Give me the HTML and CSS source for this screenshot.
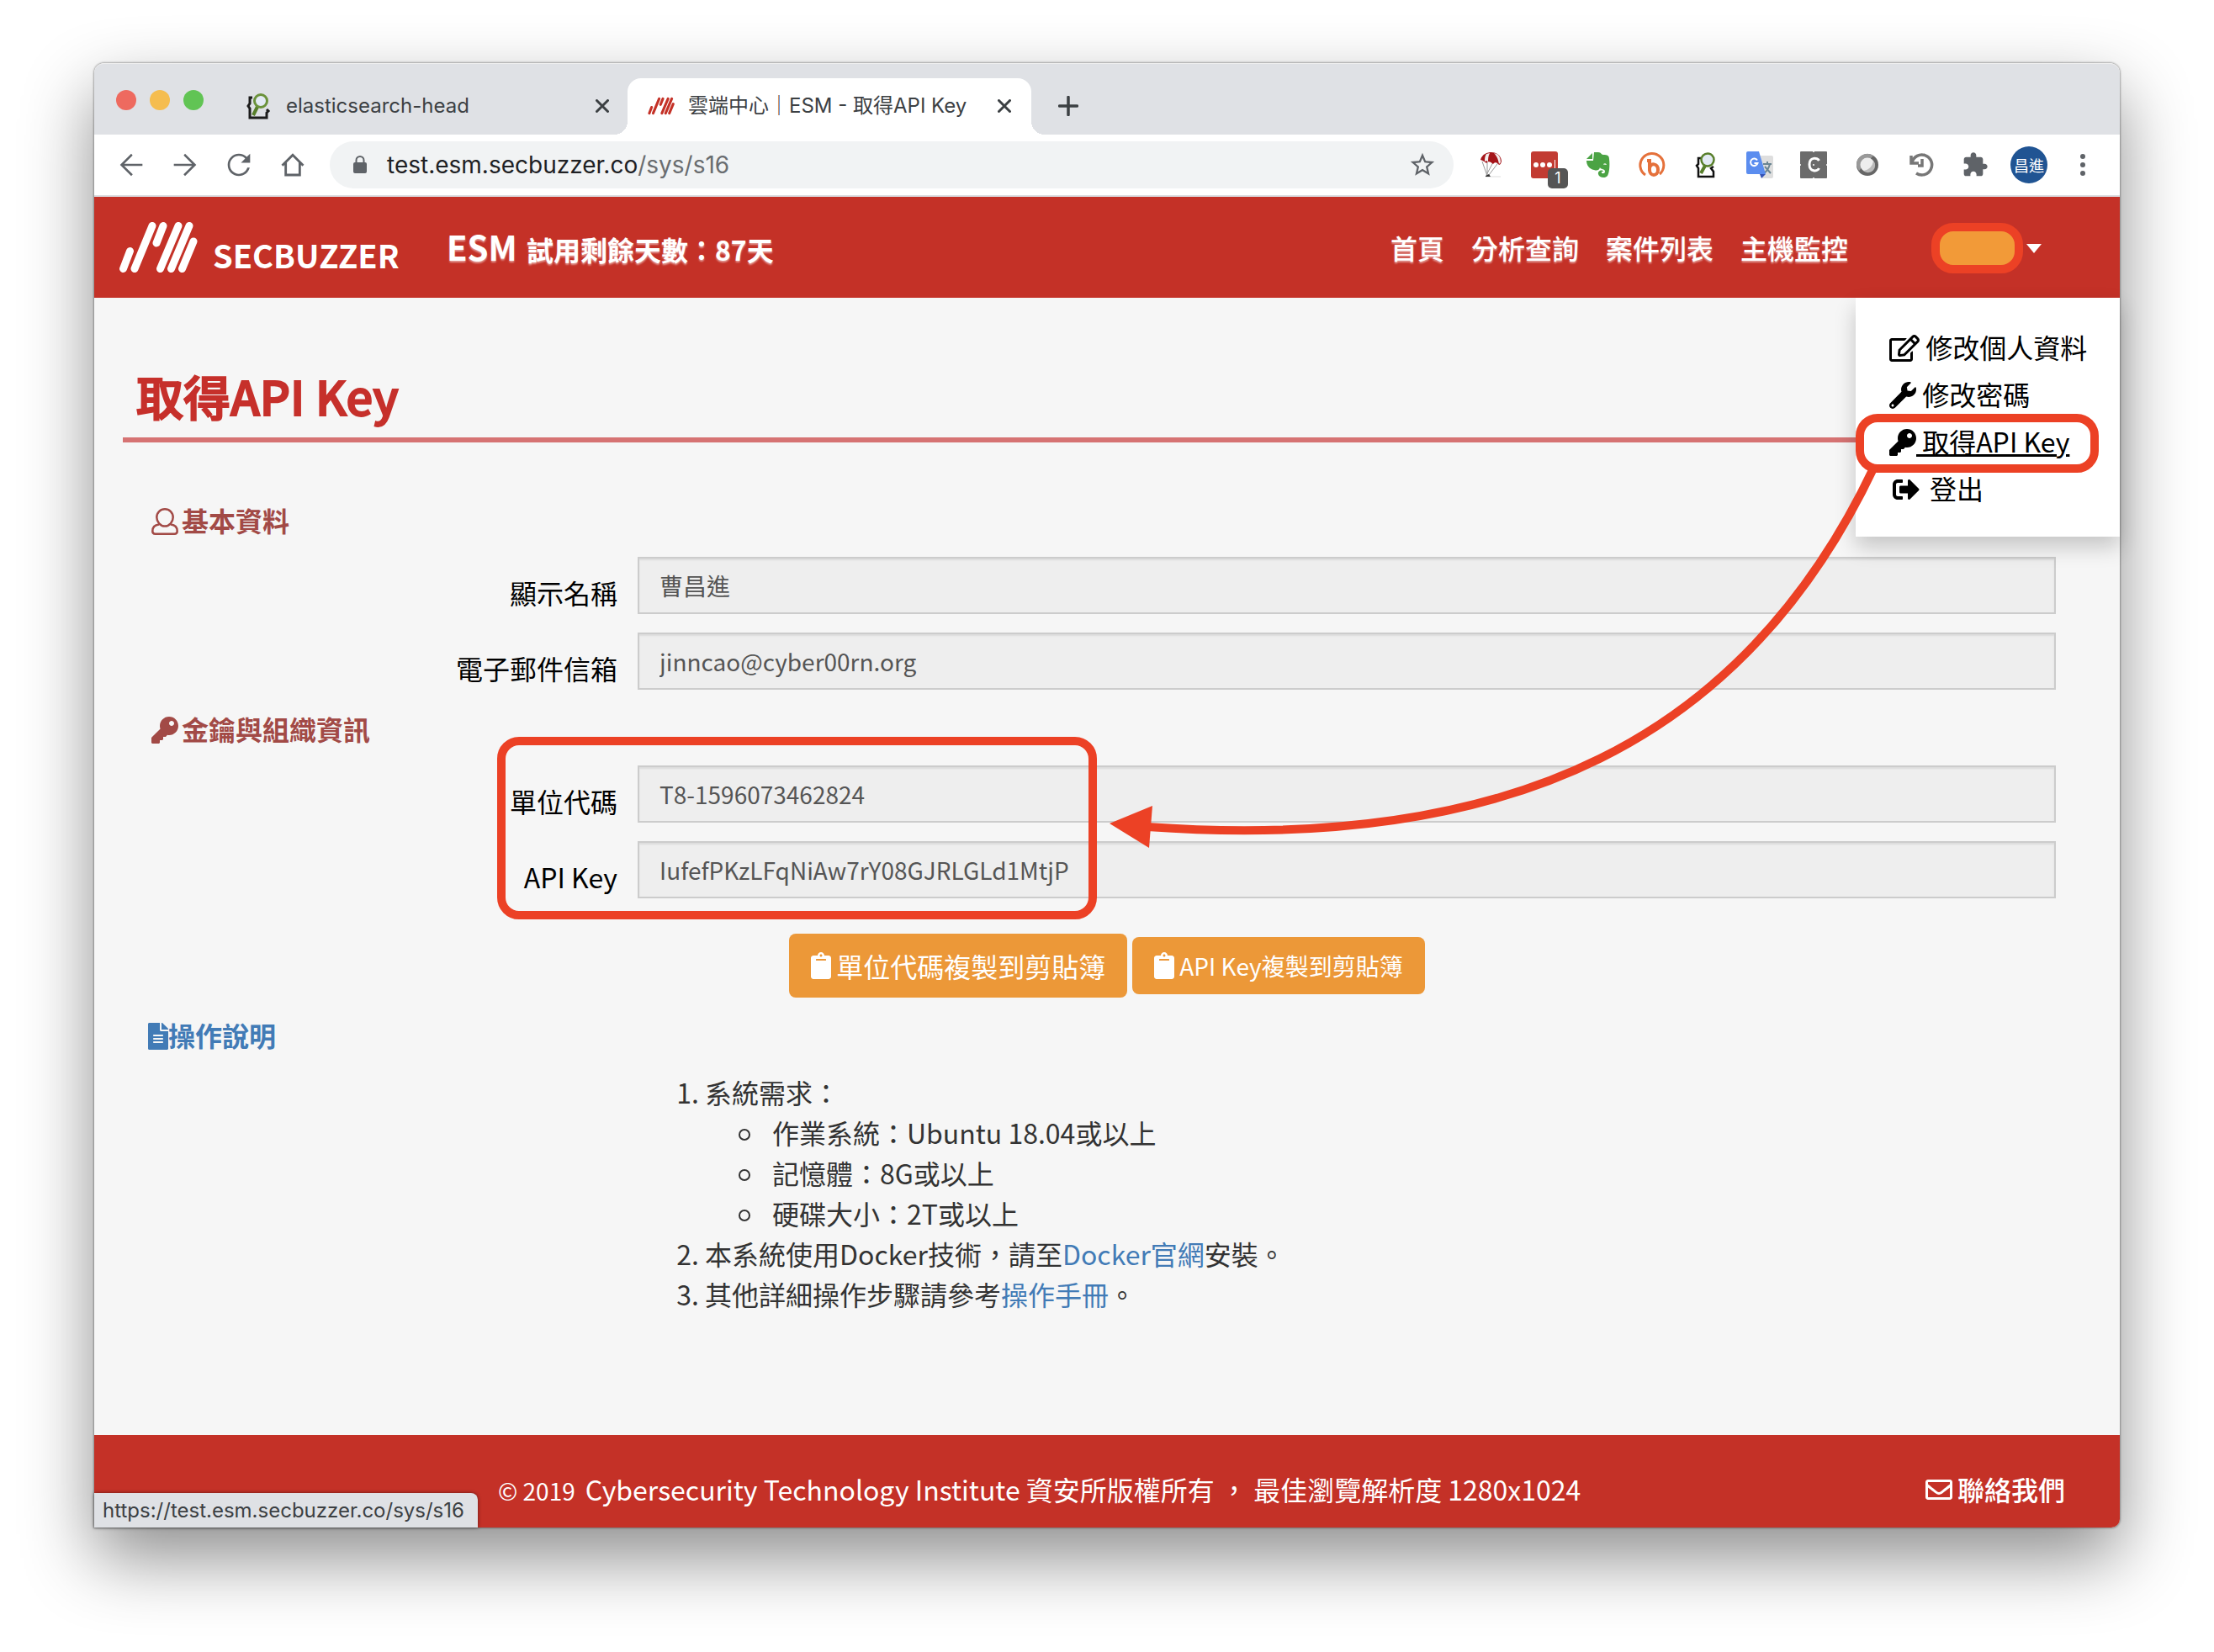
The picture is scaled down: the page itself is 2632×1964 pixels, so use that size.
FILE: index.html
```html
<!DOCTYPE html>
<html lang="zh-Hant">
<head>
<meta charset="utf-8">
<title>雲端中心｜ESM - 取得API Key</title>
<link rel="stylesheet" href="styles.css">
</head>
<body>
<svg class="sprite" aria-hidden="true">
  <symbol id="key" viewBox="0 0 512 512"><path d="M512 176.001C512 273.203 433.202 352 336 352c-11.22 0-22.19-1.062-32.827-3.069l-24.012 27.014A23.999 23.999 0 0 1 261.223 384H224v40c0 13.255-10.745 24-24 24h-40v40c0 13.255-10.745 24-24 24H24c-13.255 0-24-10.745-24-24v-78.059c0-6.365 2.529-12.47 7.029-16.971l161.802-161.802C163.108 213.814 160 195.271 160 176 160 78.798 238.797.001 335.999 0 433.488-.001 512 78.511 512 176.001zM336 128c0 26.51 21.49 48 48 48s48-21.49 48-48-21.49-48-48-48-48 21.49-48 48z"/></symbol>
  <symbol id="clipboard" viewBox="0 0 384 512"><path d="M384 112v352c0 26.51-21.49 48-48 48H48c-26.51 0-48-21.49-48-48V112c0-26.51 21.49-48 48-48h80c0-35.29 28.71-64 64-64s64 28.71 64 64h80c26.51 0 48 21.49 48 48zM192 40c-13.255 0-24 10.745-24 24s10.745 24 24 24 24-10.745 24-24-10.745-24-24-24m96 114v-20a6 6 0 0 0-6-6H102a6 6 0 0 0-6 6v20a6 6 0 0 0 6 6h180a6 6 0 0 0 6-6z"/></symbol>
  <symbol id="bars" viewBox="0 0 94 60"><path d="M5.5 55.500l8-21M19 55.500L40 4.500M45 25l8-20.500M49.500 55.500L71 4.500M62.500 55.500L84 4.500M75.500 55.500L89 23" fill="none" stroke="currentColor" stroke-width="9" stroke-linecap="round"/></symbol>
  <symbol id="close" viewBox="0 0 16 16"><path d="M1.500 1.500l13 13M14.500 1.500l-13 13" fill="none" stroke="currentColor" stroke-width="3" stroke-linecap="round"/></symbol>
  <symbol id="elastic" viewBox="0 0 32 32"><path d="M8 6H5v7l-2 3 2 3v11h20v-6l2-2-2-2" fill="none" stroke="#1c1c1c" stroke-width="3"/><path d="M14 17L9 27" stroke="#587f2b" stroke-width="4"/><circle cx="18" cy="10" r="7.500" fill="#e3eaf4" stroke="#6b923b" stroke-width="3"/></symbol>
</svg>
<div class="window">
  <div class="tabstrip">
    <div class="lights"><i class="light red"></i><i class="light yellow"></i><i class="light green"></i></div>
    <div class="tab">
      <svg class="favicon"><use href="#elastic"/></svg>
      <span class="tab-title">elasticsearch-head</span>
      <button class="tab-close" aria-label="Close"><svg><use href="#close"/></svg></button>
    </div>
    <div class="tab active">
      <svg class="favicon brand-red"><use href="#bars"/></svg>
      <span class="tab-title">雲端中心｜ESM - 取得API Key</span>
      <button class="tab-close" aria-label="Close"><svg><use href="#close"/></svg></button>
    </div>
    <button class="new-tab" aria-label="New tab"><svg viewBox="0 0 24 24"><path d="M12 1.500v21M1.500 12h21" stroke="currentColor" stroke-width="3.500" stroke-linecap="round"/></svg></button>
  </div>
  <div class="toolbar">
    <button class="tool" aria-label="Back"><svg viewBox="0 0 24 24"><path d="M20 11.200H7L13 5.200 12 4l-8 8 8 8 1.100-1.200L7 12.800h13z"/></svg></button>
    <button class="tool" aria-label="Forward"><svg viewBox="0 0 24 24"><path d="M4 11.200h13L11 5.200 12 4l8 8-8 8-1.100-1.200 6.100-6H4z"/></svg></button>
    <button class="tool" aria-label="Reload"><svg viewBox="0 0 24 24"><path d="M17.650 6.350C16.200 4.900 14.210 4 12 4c-4.420 0-7.990 3.580-7.990 8s3.570 8 7.990 8c3.730 0 6.840-2.550 7.730-6h-1.700c-.82 2.600-3.200 4.400-6.030 4.400-3.500 0-6.400-2.900-6.400-6.400s2.900-6.400 6.400-6.400c1.800 0 3.400.7 4.500 1.900L13.500 10.500H20V4z"/></svg></button>
    <button class="tool" aria-label="Home"><svg viewBox="0 0 24 24"><path d="M4.500 12.500L12 5l7.500 7.500M7 10.500v8.700h10v-8.700" fill="none" stroke="currentColor" stroke-width="1.700"/></svg></button>
    <div class="address">
      <svg class="lock" viewBox="0 0 16 22"><rect y="8" width="16" height="13" rx="2"/><path d="M3.500 9V5.500a4.500 4.500 0 0 1 9 0V9" fill="none" stroke="currentColor" stroke-width="2"/></svg>
      <span class="url" role="textbox" aria-label="Address">test.esm.secbuzzer.co<span class="path">/sys/s16</span></span>
      <button class="star" aria-label="Bookmark"><svg viewBox="0 0 24 24"><path d="M22 9.240l-7.190-.62L12 2 9.190 8.630 2 9.240l5.460 4.730L5.820 21 12 17.270 18.180 21l-1.630-7.030L22 9.240zM12 15.400l-3.760 2.270 1-4.280-3.320-2.880 4.380-.38L12 6.100l1.710 4.040 4.380.38-3.320 2.880 1 4.280L12 15.400z"/></svg></button>
    </div>
    <button class="tool ext" aria-label="Parachute"><svg viewBox="0 0 32 32"><path d="M6 12l6 17M27 11L14 28M12 12l0 16M19 13l-8 15" stroke="#999" fill="none"/><path d="M10 30h18" stroke="#ddd"/><path d="M4 10C6 3 12 1 17 1c7 0 12 5 12 11-1 3-2 4-3 4-2-3-5-4-7-1-3-3-6-4-8-1-2-2-4-3-7-4z" fill="#a51419"/><path d="M11 3c-2 3-2 6-2 9 2-1 3-1 4 1 0-4 0-7 2-11zM20 2c3 3 5 7 6 13l2-2c0-5-2-9-5-10z" fill="#f3eeee"/><path d="M10 29l4-2 2 3h-6z" fill="#333"/></svg></button>
    <button class="tool ext" aria-label="Passwords"><svg viewBox="0 0 32 32"><rect width="32" height="32" rx="3" fill="#c23b32"/><g fill="#fff"><circle cx="6" cy="16" r="3"/><circle cx="14" cy="16" r="3"/><circle cx="22" cy="16" r="3"/><path d="M28 10h1v12h-1z"/></g></svg><span class="badge">1</span></button>
    <button class="tool ext" aria-label="Notes"><svg viewBox="0 0 32 32"><path d="M11 1h5c4 0 3 3 6 3 5 0 7 1 7 5 1 8 0 17-2 20-2 3-10 3-11-2-1-4 5-6 6-3h-2c-1 3 4 3 4 0 0-4-5-2-6-5-1 4-4 4-7 3C5 21 2 16 2 11h8z" fill="#4ba344"/><path d="M9 2v7H2z" fill="#4ba344"/><path d="M22 15q3-2 4 1l-4-.5z" fill="#fff"/></svg></button>
    <button class="tool ext" aria-label="Bitly"><svg viewBox="0 0 32 32"><g fill="none" stroke="#e5713b" stroke-width="3"><path d="M8 28A14 14 0 1 1 25 27"/><path d="M10 11h3v12M13 20c1-7 10-6 10 2s-10 8-10 0" stroke-width="4"/></g></svg></button>
    <button class="tool ext" aria-label="Elasticsearch head"><svg viewBox="0 0 32 32"><path d="M10 8H7v7l-2 2 2 3v10h18v-6l-3-4 3-2" fill="none" stroke="#111" stroke-width="2.500"/><path d="M15 17L10 26" stroke="#587f2b" stroke-width="4"/><circle cx="18" cy="10" r="7.500" fill="#e3eaf4" stroke="#587f2b" stroke-width="2.500"/></svg></button>
    <button class="tool ext" aria-label="Translate"><svg viewBox="0 0 32 32"><path d="M12 5h18a2 2 0 0 1 2 2v23a2 2 0 0 1-2 2H19z" fill="#dedede"/><path d="M20 15h10M25 12v3M21 26c4-3 6-7 7-11M22 18l7 8" fill="none" stroke="#6b8592" stroke-width="2"/><path d="M16 27h7l-5 5z" fill="#3553b5"/><path d="M2 0h13l8 27H2a2 2 0 0 1-2-2V2a2 2 0 0 1 2-2z" fill="#5b8def"/><path d="M13 10.500A4.300 4.300 0 1 0 13.500 14H9.500" fill="none" stroke="#fff" stroke-width="2"/></svg></button>
    <button class="tool ext" aria-label="Capture"><svg viewBox="0 0 32 32"><rect width="32" height="32" rx="1" fill="#6b6b6b"/><path d="M22.500 11C20.500 7 11 6.500 11 15.500S20.500 24.500 22.500 20" fill="none" stroke="#fff" stroke-width="3"/><path d="M15 0h2v1h-2zM15 31h2v1h-2zM0 15h1v2H0zM31 15h1v2h-1zM15 15h2v2h-2z" fill="#ddd"/></svg></button>
    <button class="tool ext" aria-label="Moon"><svg viewBox="0 0 32 32"><circle cx="16" cy="16" r="13" fill="#666"/><path d="M3 17A13 13 0 0 1 23 5L6 23z" fill="#999"/><circle cx="16" cy="16" r="8.500" fill="#eee"/><path d="M23 11a8.500 8.500 0 0 1-12 12c7-1 11-5 12-12z" fill="#bbb"/></svg></button>
    <button class="tool ext" aria-label="History"><svg viewBox="0 0 32 32"><path d="M4 5v9h9M5 13A12 12 0 1 1 10 26M17 9v8h-5" fill="none" stroke="#777" stroke-width="3.500"/></svg></button>
    <button class="tool ext" aria-label="Extensions"><svg viewBox="0 0 24 24"><path d="M20.500 11H19V7c0-1.100-.9-2-2-2h-4V3.500C13 2.120 11.880 1 10.500 1S8 2.120 8 3.500V5H4c-1.100 0-1.990.9-1.990 2v3.800H3.500c1.490 0 2.700 1.210 2.700 2.700s-1.210 2.700-2.700 2.700H2V20c0 1.100.9 2 2 2h3.800v-1.500c0-1.490 1.210-2.700 2.700-2.700 1.490 0 2.700 1.210 2.700 2.700V22H17c1.100 0 2-.9 2-2v-4h1.500c1.380 0 2.500-1.120 2.500-2.500S21.880 11 20.500 11z"/></svg></button>
    <button class="tool"><span class="avatar">昌進</span></button>
    <button class="tool ext" aria-label="Menu"><svg viewBox="0 0 32 32"><circle cx="16" cy="6" r="3"/><circle cx="16" cy="16" r="3"/><circle cx="16" cy="26" r="3"/></svg></button>
  </div>

  <header class="site-header">
    <a class="logo" href="#"><svg><use href="#bars"/></svg><span>SECBUZZER</span></a>
    <p class="trial"><span class="esm">ESM</span> <span>試用剩餘天數：87天</span></p>
    <nav class="nav">
      <a href="#">首頁</a><a href="#">分析查詢</a><a href="#">案件列表</a><a href="#">主機監控</a>
    </nav>
    <button class="account" aria-label="Account"><span class="mask"></span><span class="caret"></span></button>
    <div class="menu">
      <a href="#"><svg class="wide" viewBox="0 0 576 512"><path d="M402.300 344.900l32-32c5-5 13.700-1.500 13.700 5.700V464c0 26.500-21.500 48-48 48H48c-26.500 0-48-21.500-48-48V112c0-26.500 21.500-48 48-48h273.500c7.100 0 10.700 8.600 5.700 13.700l-32 32c-1.500 1.500-3.500 2.300-5.700 2.300H48v352h352V350.500c0-2.100.8-4.100 2.300-5.600zm156.600-201.800L296.300 405.700l-90.400 10c-26.200 2.900-48.500-19.200-45.600-45.600l10-90.400L432.900 17.100c22.900-22.900 59.900-22.900 82.700 0l43.200 43.200c22.900 22.900 22.900 60 .1 82.800zM460.100 174L402 115.900 216.200 301.800l-7.300 65.300 65.300-7.300L460.100 174zm64.800-79.700l-43.200-43.200c-4.100-4.100-10.800-4.100-14.800 0L436 82l58.100 58.100 30.900-30.900c4-4.200 4-10.800-.1-14.900z"/></svg>&nbsp;修改個人資料</a>
      <a href="#"><svg viewBox="0 0 512 512"><path d="M507.730 109.100c-2.240-9.030-13.540-12.090-20.120-5.510l-74.360 74.360-67.880-11.310-11.310-67.880 74.360-74.360c6.620-6.620 3.430-17.900-5.660-20.160-47.380-11.740-99.550.91-136.580 37.930-39.640 39.640-50.550 97.100-34.050 147.200L18.740 402.760c-24.990 24.990-24.990 65.510 0 90.500 24.990 24.990 65.510 24.990 90.500 0l213.210-213.210c50.120 16.710 107.470 5.680 147.370-34.220 37.070-37.070 49.700-89.320 37.910-136.730zM64 472c-13.250 0-24-10.750-24-24 0-13.260 10.750-24 24-24s24 10.740 24 24c0 13.250-10.750 24-24 24z"/></svg>&nbsp;修改密碼</a>
      <a class="current" href="#"><svg><use href="#key"/></svg><span>&nbsp;取得API Key</span></a>
      <a class="logout" href="#"><svg viewBox="0 0 512 512"><path d="M497 273L329 441c-15 15-41 4.500-41-17v-96H152c-13.300 0-24-10.700-24-24v-96c0-13.300 10.700-24 24-24h136V88c0-21.400 25.900-32 41-17l168 168c9.300 9.400 9.300 24.600 0 34zM192 436v-40c0-6.600-5.400-12-12-12H96c-17.700 0-32-14.300-32-32V160c0-17.700 14.300-32 32-32h84c6.600 0 12-5.400 12-12V76c0-6.600-5.400-12-12-12H96c-53 0-96 43-96 96v192c0 53 43 96 96 96h84c6.600 0 12-5.400 12-12z"/></svg>登出</a>
    </div>
  </header>

  <main class="page">
    <h1>取得API Key</h1>
    <h2 class="first"><svg viewBox="0 0 32 32"><path d="M9 19.500C4 20 1.300 23 1.300 27.500c0 2 1.500 3.200 3.200 3.200h23c1.700 0 3.200-1.200 3.200-3.200 0-4.500-2.700-7.500-7.700-8M16 1.300c5.500 0 9.700 4.200 9.700 9.700S21.500 21.500 16 21.500 6.300 16.500 6.300 11 10.500 1.300 16 1.300z" fill="none" stroke="currentColor" stroke-width="2.500"/></svg>基本資料</h2>
    <div class="fields">
      <div class="field"><label for="name">顯示名稱</label><input id="name" type="text" value="曹昌進" readonly></div>
      <div class="field"><label for="mail">電子郵件信箱</label><input id="mail" type="text" value="jinncao@cyber00rn.org" readonly></div>
    </div>
    <h2><svg><use href="#key"/></svg>金鑰與組織資訊</h2>
    <div class="fields marked">
      <div class="field"><label for="unit">單位代碼</label><input id="unit" type="text" value="T8-1596073462824" readonly></div>
      <div class="field"><label for="apikey">API Key</label><input id="apikey" type="text" value="IufefPKzLFqNiAw7rY08GJRLGLd1MtjP" readonly></div>
    </div>
    <div class="actions">
      <button class="copy large"><svg><use href="#clipboard"/></svg>單位代碼複製到剪貼簿</button>
      <button class="copy"><svg><use href="#clipboard"/></svg>API Key複製到剪貼簿</button>
    </div>
    <h2 class="guide"><svg viewBox="0 0 384 512"><path d="M224 136V0H24C10.700 0 0 10.700 0 24v464c0 13.300 10.700 24 24 24h336c13.300 0 24-10.700 24-24V160H248c-13.200 0-24-10.800-24-24zm64 236c0 6.600-5.400 12-12 12H108c-6.600 0-12-5.400-12-12v-8c0-6.600 5.400-12 12-12h168c6.600 0 12 5.400 12 12v8zm0-64c0 6.600-5.400 12-12 12H108c-6.600 0-12-5.400-12-12v-8c0-6.600 5.400-12 12-12h168c6.600 0 12 5.400 12 12v8zm0-72v8c0 6.600-5.400 12-12 12H108c-6.600 0-12-5.400-12-12v-8c0-6.600 5.400-12 12-12h168c6.600 0 12 5.400 12 12zm96-114.100v6.100H256V0h6.100c6.400 0 12.500 2.500 17 7l97.900 98c4.500 4.500 7 10.600 7 16.900z"/></svg>操作說明</h2>
    <ol class="steps">
      <li>系統需求：
        <ul><li>作業系統：Ubuntu 18.04或以上</li><li>記憶體：8G或以上</li><li>硬碟大小：2T或以上</li></ul>
      </li>
      <li>本系統使用Docker技術，請至<a href="#">Docker官網</a>安裝。</li>
      <li>其他詳細操作步驟請參考<a href="#">操作手冊</a>。</li>
    </ol>
    <svg class="arrow" viewBox="1310 550 930 470"><path d="M2228 555C2075 878 1800 1014 1364 983" fill="none" stroke="currentColor" stroke-width="10"/><path d="M1319 979l51-21-4 50z"/></svg>
  </main>

  <footer class="site-footer">
    <p><small>© 2019</small><span>Cybersecurity Technology Institute 資安所版權所有 ， 最佳瀏覽解析度 1280x1024</span></p>
    <a href="#"><svg viewBox="0 0 512 512"><path d="M464 64H48C21.490 64 0 85.490 0 112v288c0 26.510 21.490 48 48 48h416c26.510 0 48-21.490 48-48V112c0-26.510-21.490-48-48-48zm0 48v40.805c-22.422 18.259-58.168 46.651-134.587 106.490-16.841 13.247-50.201 45.072-73.413 44.701-23.208.375-56.579-31.459-73.413-44.701C106.180 199.465 70.425 171.067 48 152.805V112h416zM48 400V214.398c22.914 18.251 55.409 43.862 104.938 82.646 21.857 17.205 60.134 55.186 103.062 54.955 42.717.231 80.509-37.199 103.053-54.947 49.528-38.783 82.032-64.401 104.947-82.653V400H48z"/></svg>聯絡我們</a>
    <div class="status">https://test.esm.secbuzzer.co/sys/s16</div>
  </footer>
</div>
</body>
</html>
```
FILE: styles.css
```css
*, *::before, *::after { box-sizing: border-box; }

:root {
  --red: #c43127;
  --mark: #ec4125;
  --orange: #ec9838;
  --site: "Noto Sans CJK TC", sans-serif;
  --chrome: Inter, "Noto Sans CJK TC", sans-serif;
}

body {
  margin: 0;
  min-height: 100vh;
  padding: 75px 112px 148px;
  display: flex;
  background: #fff;
  font: 32px/48px var(--site);
  color: #333;
}

h1, h2, p, ol, ul { margin: 0; padding: 0; }
a { color: inherit; text-decoration: none; }
button { border: 0; padding: 0; background: none; color: inherit; font: inherit; }
svg { fill: currentColor; flex: none; }
.sprite { position: absolute; width: 0; height: 0; }

.window {
  flex: 1;
  min-width: 0;
  display: flex;
  flex-direction: column;
  border-radius: 12px 12px 10px 0;
  background: #f6f6f6;
  box-shadow: 0 0 2px 1px rgba(0, 0, 0, .3), 0 36px 84px rgba(0, 0, 0, .45);
}

/* browser tabs */
.tabstrip {
  display: flex;
  height: 85px;
  padding: 17px 24px 0 26px;
  border-radius: 12px 12px 0 0;
  border-top: 1px solid #eee;
  background: #dfe1e5;
  color: #3c4043;
  font: 24px/32px var(--chrome);
}
.lights { display: flex; gap: 16px; width: 132px; padding-top: 14px; }
.light { width: 24px; height: 24px; border-radius: 50%; }
.red { background: #ee6a5f; }
.yellow { background: #f5bd4f; }
.green { background: #61c454; }
.tab {
  position: relative;
  display: flex;
  align-items: center;
  width: 476px;
  padding: 0 22px 2px;
}
.tab.active { width: 480px; padding: 0 24px 2px; border-radius: 16px 16px 0 0; background: #fff; }
.tab.active::before, .tab.active::after {
  content: "";
  position: absolute;
  bottom: 0;
  width: 16px;
  height: 16px;
}
.tab.active::before { left: -16px; background: radial-gradient(circle at 0 0, transparent 16px, #fff 16px); }
.tab.active::after { right: -16px; background: radial-gradient(circle at 100% 0, transparent 16px, #fff 16px); }
.favicon { width: 32px; height: 32px; }
.brand-red { color: var(--red); }
.tab-title { flex: 1; padding-left: 16px; white-space: nowrap; }
.tab-close svg { display: block; width: 16px; height: 16px; }
.new-tab { display: flex; align-items: center; padding: 0 0 2px 32px; }
.new-tab svg { width: 24px; height: 24px; }

/* browser toolbar */
.toolbar {
  display: flex;
  align-items: center;
  height: 74px;
  padding: 0 12px;
  border-bottom: 2px solid #dadce0;
  background: #fff;
  color: #5f6368;
  font-family: var(--chrome);
}
.tool { position: relative; flex: none; display: flex; justify-content: center; align-items: center; width: 64px; height: 56px; }
.tool svg { width: 40px; height: 40px; }
.ext svg { width: 32px; height: 32px; }
.address {
  flex: 1;
  display: flex;
  align-items: center;
  height: 56px;
  margin: 0 12px;
  padding: 0 20px 0 28px;
  border-radius: 28px;
  background: #f1f3f4;
}
.lock { width: 16px; height: 22px; margin-right: 24px; }
.url { flex: 1; color: #202124; font-size: 28px; }
.path { color: #6a6d70; }
.star svg { display: block; width: 34px; height: 34px; }
.badge {
  position: absolute;
  right: 4px;
  bottom: 0;
  width: 24px;
  border-radius: 5px;
  background: #555;
  color: #fff;
  font-size: 18px;
  line-height: 24px;
}
.avatar { width: 44px; border-radius: 50%; background: #205493; color: #fff; font: 18px/44px var(--site); }

/* site header */
.site-header {
  position: relative;
  z-index: 1;
  display: flex;
  align-items: center;
  height: 120px;
  padding: 0 93px 0 29px;
  background: var(--red);
  color: #fff;
  font-weight: 500;
}
.logo { display: flex; align-items: flex-end; gap: 18px; width: 390px; }
.logo svg { width: 94px; height: 60px; }
.logo span { font: 700 38px/42px var(--site); }
.trial, .nav { text-shadow: 0 2px 2px rgba(255, 255, 255, .5); }
.trial { flex: 1; font-weight: 700; white-space: nowrap; }
.esm { font-size: 40px; margin-right: 4px; }
.nav { display: flex; gap: 32px; margin-right: 99px; }
.account { display: flex; align-items: center; gap: 4px; padding-top: 2px; }
.mask { width: 109px; height: 60px; border: 10px solid var(--mark); border-radius: 26px; background: #f29a38; }
.caret { border: 9px solid transparent; border-top: 11px solid #fff; border-bottom: 0; }
.menu {
  position: absolute;
  top: 100%;
  right: 0;
  width: 314px;
  padding: 30px 0 30px 40px;
  background: #fff;
  box-shadow: 0 12px 24px rgba(0, 0, 0, .2);
  color: #000;
  font-weight: 400;
}
.menu a { position: relative; display: flex; align-items: center; height: 56px; white-space: nowrap; }
.menu svg { width: 32px; height: 32px; margin-top: 4px; }
.menu .wide { width: 36px; }
.menu .current span { text-decoration: underline; }
.menu .current::after {
  content: "";
  position: absolute;
  inset: -4px 25px -10px -40px;
  border: 10px solid var(--mark);
  border-radius: 26px;
}
.menu .logout { gap: 12px; padding-left: 4px; }

/* page */
.page { position: relative; flex: 1; padding: 76px 34px 0; }
h1 {
  padding: 0 16px 10px;
  border-bottom: 6px solid #d67373;
  color: #c6302b;
  font-size: 56px;
  font-weight: 500;
  line-height: 80px;
  -webkit-text-stroke: 2px currentColor;
}
h2 {
  display: flex;
  align-items: center;
  gap: 4px;
  margin: 22px 0 20px;
  padding-left: 34px;
  color: #a24a46;
  font-size: 32px;
  line-height: 48px;
}
h2.first { margin-top: 68px; }
h2 svg { width: 32px; height: 32px; margin-top: 4px; }
.fields { position: relative; display: grid; gap: 22px; padding-right: 42px; }
.field { display: grid; grid-template-columns: 588px 1fr; gap: 24px; align-items: center; }
.field label { padding-top: 16px; text-align: right; color: #000; }
.field input {
  width: 100%;
  height: 68px;
  padding: 0 24px;
  border: 2px solid #ccc;
  border-radius: 0;
  background: #eee;
  box-shadow: inset 0 2px 2px rgba(0, 0, 0, .075);
  color: #555;
  font: 28px/40px var(--site);
}
.marked::after {
  content: "";
  position: absolute;
  top: -34px;
  bottom: -25px;
  left: 445px;
  width: 713px;
  border: 10px solid var(--mark);
  border-radius: 26px;
}
.actions { display: flex; justify-content: center; align-items: center; gap: 6px; margin-top: 42px; }
.copy {
  display: flex;
  align-items: center;
  gap: 6px;
  height: 68px;
  padding: 0 26px;
  border-radius: 8px;
  background: var(--orange);
  color: #fff;
  font-size: 28px;
}
.copy.large { height: 76px; font-size: 32px; }
.copy svg { width: 24px; height: 32px; }
h2.guide { gap: 0; margin: 20px 0; padding-left: 30px; color: #427bb6; }
h2.guide svg { width: 24px; }
.steps { padding-left: 692px; }
.steps ul { padding-left: 80px; list-style: none; }
.steps ul li::before {
  content: "";
  display: inline-block;
  width: 14px;
  height: 14px;
  margin: 0 26px 0 -40px;
  border: 2px solid #333;
  border-radius: 50%;
  vertical-align: 4px;
}
.steps a { color: #427bb6; }
.arrow { position: absolute; top: 196px; right: 280px; z-index: 2; width: 930px; height: 470px; color: var(--mark); }

/* footer */
.site-footer {
  position: relative;
  display: flex;
  justify-content: space-between;
  height: 110px;
  padding: 40px 65px 0 480px;
  border-radius: 0 0 10px 0;
  background: var(--red);
  color: #fff;
}
.site-footer p { display: flex; align-items: baseline; gap: 12px; white-space: nowrap; }
.site-footer small { font-size: 28px; }
.site-footer a { display: flex; align-items: center; align-self: flex-start; gap: 6px; font-weight: 500; }
.site-footer a svg { width: 32px; height: 32px; margin-top: 2px; }
.status {
  position: absolute;
  left: 0;
  bottom: 0;
  padding: 0 16px 0 10px;
  border-radius: 0 8px 0 0;
  background: #dfe1e5;
  box-shadow: 0 0 4px rgba(0, 0, 0, .5);
  color: #3c4043;
  font: 24px/41px var(--chrome);
}
```
